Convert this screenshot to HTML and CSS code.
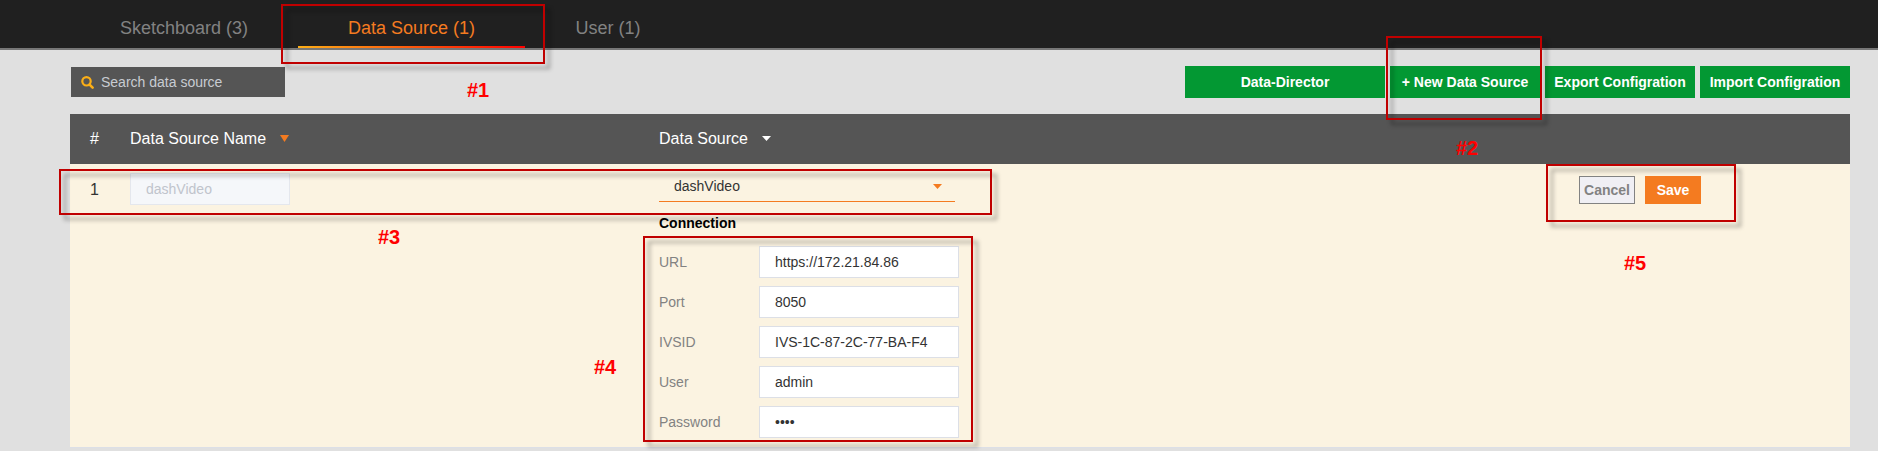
FILE: index.html
```html
<!DOCTYPE html>
<html lang="en">
<head>
<meta charset="utf-8">
<title>Data Source</title>
<link rel="stylesheet" href="styles.css">
</head>
<body>
<nav class="tabs">
  <a class="tab">Sketchboard (3)</a>
  <a class="tab active">Data Source (1)</a>
  <a class="tab">User (1)</a>
</nav>
<main class="content">
  <div class="toolbar">
    <div class="search">
      <svg class="search-icon" viewBox="0 0 13 13"><circle cx="5.5" cy="5.3" r="4.2" fill="none" stroke="#fcaf17" stroke-width="2.2"/><path d="M8.6 8.6 11.6 11.6" stroke="#fcaf17" stroke-width="2.6" stroke-linecap="round"/></svg>
      <span>Search data source</span>
    </div>
    <div class="actions">
      <div class="btn wide">Data-Director</div>
      <div class="btn">+ New Data Source</div>
      <div class="btn">Export Configration</div>
      <div class="btn">Import Configration</div>
    </div>
  </div>
  <section class="table">
    <div class="row head">
      <div class="num">#</div>
      <div class="name">Data Source Name<svg class="caret orange tall" viewBox="0 0 9 7"><path d="M0 0H9L4.5 7Z"/></svg></div>
      <div class="source">Data Source<svg class="caret" viewBox="0 0 9 5"><path d="M0 0H9L4.5 5Z"/></svg></div>
    </div>
    <div class="row body">
      <div class="num">1</div>
      <div class="name"><div class="field disabled">dashVideo</div></div>
      <div class="source">
        <div class="select"><span>dashVideo</span><svg class="caret orange" viewBox="0 0 9 5"><path d="M0 0H9L4.5 5Z"/></svg></div>
        <div class="group-title">Connection</div>
        <div class="form">
          <label>URL</label><div class="field">https://172.21.84.86</div>
          <label>Port</label><div class="field">8050</div>
          <label>IVSID</label><div class="field">IVS-1C-87-2C-77-BA-F4</div>
          <label>User</label><div class="field">admin</div>
          <label>Password</label><div class="field">••••</div>
        </div>
      </div>
      <div class="row-actions"><div class="small cancel">Cancel</div><div class="small save">Save</div></div>
    </div>
  </section>
</main>
<div class="mark m1"></div><div class="mark m2"></div><div class="mark m3"></div><div class="mark m4"></div><div class="mark m5"></div>
<div class="tag t1">#1</div><div class="tag t2">#2</div><div class="tag t3">#3</div><div class="tag t4">#4</div><div class="tag t5">#5</div>
</body>
</html>
```
FILE: styles.css
```css
* { box-sizing: border-box; }
body { margin: 0; position: relative; height: 451px; overflow: hidden; background: #e0e0e0; font: 14px "Liberation Sans", Arial, sans-serif; }
.tabs { display: flex; height: 50px; padding-left: 70px; background: #202020; border-bottom: 2px solid #777; }
.tab { width: 227px; height: 48px; line-height: 56px; text-align: center; font-size: 18px; color: #828282; border-bottom: 2px solid transparent; }
.tab:first-child { width: 228px; }
.tab:last-child { width: 166px; }
.tab.active { color: #f47b20; border-image: linear-gradient(90deg, #fcaf17, #f00) 1; }
.content { padding: 16px 28px 0 70px; }
.toolbar { display: flex; justify-content: space-between; height: 48px; }
.search { display: flex; align-items: center; gap: 7px; width: 214px; height: 30px; margin: 1px 0 0 1px; padding-left: 10px; background: #555; color: #c8ccd2; }
.search-icon { width: 13px; height: 13px; }
.actions { display: flex; gap: 5px; }
.btn { width: 150px; height: 32px; line-height: 32px; background: #039833; color: #fff; font-weight: bold; text-align: center; white-space: nowrap; }
.btn.wide { width: 200px; }
.row { display: grid; grid-template-columns: 60px 529px 920px 1fr; }
.head { height: 50px; line-height: 50px; background: #555; color: #fff; font-size: 16px; }
.num { padding-left: 20px; font-size: 16px; }
.caret { width: 9px; height: 5px; margin-left: 14px; vertical-align: 3px; fill: #fff; }
.caret.tall { height: 7px; vertical-align: 2px; }
.caret.orange { fill: #f47b20; }
.body { height: 284px; background: #fbf3e1; border-bottom: 1px solid #dcdfe6; color: #333; }
.body .num { padding-top: 17px; }
.body .name { padding-top: 9px; }
.field { width: 200px; height: 32px; padding-left: 15px; line-height: 31px; background: #fff; border: 1px solid #dcdfe6; }
.field.disabled { width: 160px; background: #f5f7fa; border-color: #e4e7ed; color: #c0c4cc; }
.select { display: flex; align-items: center; justify-content: space-between; width: 296px; height: 38px; padding: 7px 13px 0 15px; border-bottom: 1px solid #f47b20; }
.group-title { height: 44px; padding-top: 13px; color: #000; font-weight: bold; }
.form { display: grid; grid-template-columns: 100px 200px; row-gap: 8px; }
.form label { line-height: 33px; height: 32px; color: #828282; }
.row-actions { display: flex; gap: 10px; padding-top: 12px; }
.small { width: 56px; height: 28px; line-height: 28px; font-weight: bold; text-align: center; }
.cancel { line-height: 26px; border: 1px solid #828282; background: #f0eff4; color: #828282; }
.save { background: #f47b20; color: #fff; }
/* Annotations laid over the page */
.mark { position: absolute; border: 2px solid #c00000; filter: drop-shadow(5px 5px 2px rgba(0, 0, 0, .36)); }
.m1 { left: 281px; top: 4px; width: 264px; height: 60px; }
.m2 { left: 1386px; top: 36px; width: 156px; height: 84px; }
.m3 { left: 59px; top: 169px; width: 933px; height: 46px; }
.m4 { left: 643px; top: 236px; width: 330px; height: 206px; }
.m5 { left: 1546px; top: 164px; width: 190px; height: 58px; }
.tag { position: absolute; font-size: 20px; line-height: 24px; font-weight: bold; color: #f00; }
.t1 { left: 467px; top: 78px; }
.t2 { left: 1456px; top: 136px; }
.t3 { left: 378px; top: 225px; }
.t4 { left: 594px; top: 355px; }
.t5 { left: 1624px; top: 251px; }
```
